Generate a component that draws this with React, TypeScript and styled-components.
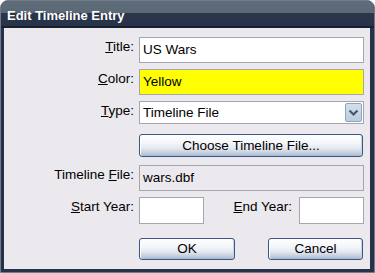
import React from 'react';
import styled, { createGlobalStyle } from 'styled-components';

const GlobalStyle = createGlobalStyle`
  html, body {
    margin: 0;
    padding: 0;
    background: #ffffff;
  }
  * {
    box-sizing: border-box;
  }
`;

const Window = styled.div`
  width: 375px;
  height: 273px;
  display: flex;
  flex-direction: column;
  border: 1px solid #6f7c8c;
  border-radius: 8px 8px 0 0;
  background: #26324a;
  overflow: hidden;
  font-family: 'Liberation Sans', Arial, sans-serif;
`;

const TitleBar = styled.div`
  height: 27px;
  flex: none;
  display: flex;
  align-items: center;
  padding: 3px 0 0 6px;
  background: linear-gradient(#5f6d7a 0%, #5b6976 46%, #2b3649 48%, #27334a 100%);
  border-bottom: 2px solid #18202e;
  color: #ffffff;
  font-size: 13px;
  font-weight: bold;
`;

const Body = styled.div`
  flex: 1;
  margin: 0 4px 3px 3px;
  padding: 9px 6px 0 0;
  background: #ebe9ed;
  display: flex;
  flex-direction: column;
`;

const Row = styled.div<{ $mt: number; $h: number }>`
  display: grid;
  grid-template-columns: 130px 1fr;
  column-gap: 5px;
  margin-top: ${p => p.$mt}px;
  height: ${p => p.$h}px;
`;

const Label = styled.label`
  text-align: right;
  font-size: 13.5px;
  color: #000000;
  padding-top: 2px;
  white-space: nowrap;
`;

const Field = styled.div<{ $bg?: string }>`
  height: 100%;
  border: 1px solid #a4a8ae;
  background: ${p => p.$bg || '#ffffff'};
  font-size: 13.5px;
  color: #000000;
  padding: 0 3px 1px;
  display: flex;
  align-items: center;
  position: relative;
`;

const SelectArrow = styled.div`
  position: absolute;
  top: 1px;
  right: 1px;
  bottom: 1px;
  width: 17px;
  border: 1px solid #8fa3bd;
  border-radius: 2px;
  background: linear-gradient(#d3dfec, #bccddf);
  display: flex;
  align-items: center;
  justify-content: center;
`;

const Button = styled.button<{ $w: number }>`
  height: 100%;
  width: ${p => p.$w}px;
  border: 1px solid #3a5684;
  border-radius: 3px;
  background: linear-gradient(#ffffff 0%, #f3f5f9 40%, #e2e7ef 65%, #c4cfdd 85%, #a9b8cc 100%);
  box-shadow: inset 1px 0 0 #ffffff, inset -1px 0 0 #c9d3e1;
  font-family: 'Liberation Sans', Arial, sans-serif;
  font-size: 13.5px;
  color: #000000;
  padding: 0 0 1px;
`;

const YearGroup = styled.div`
  display: flex;
  height: 100%;
`;

const YearInput = styled(Field)`
  width: 65px;
  flex: none;
`;

const InlineLabel = styled(Label)`
  flex: 1;
  padding-right: 7px;
`;

const ButtonRow = styled.div`
  display: flex;
  justify-content: space-between;
  height: 100%;
  padding-right: 1px;
`;

const Chevron = () => (
  <svg width="11" height="8" viewBox="0 0 11 8">
    <polyline points="1.5,1.5 5.5,5.5 9.5,1.5" fill="none" stroke="#4a5666" strokeWidth="2.2" />
  </svg>
);

export default function App() {
  return (
    <>
      <GlobalStyle />
      <Window>
        <TitleBar>Edit Timeline Entry</TitleBar>
        <Body>
          <Row $mt={0} $h={26}>
            <Label><u>T</u>itle:</Label>
            <Field>US Wars</Field>
          </Row>
          <Row $mt={6} $h={26}>
            <Label><u>C</u>olor:</Label>
            <Field $bg="#ffff00">Yellow</Field>
          </Row>
          <Row $mt={6} $h={23}>
            <Label><u>T</u>ype:</Label>
            <Field>
              Timeline File
              <SelectArrow>
                <Chevron />
              </SelectArrow>
            </Field>
          </Row>
          <Row $mt={10} $h={23}>
            <span />
            <Button $w={224}>Choose Timeline File...</Button>
          </Row>
          <Row $mt={8} $h={26}>
            <Label>Timeline <u>F</u>ile:</Label>
            <Field $bg="#ebe9ed">wars.dbf</Field>
          </Row>
          <Row $mt={6} $h={27}>
            <Label><u>S</u>tart Year:</Label>
            <YearGroup>
              <YearInput />
              <InlineLabel><u>E</u>nd Year:</InlineLabel>
              <YearInput />
            </YearGroup>
          </Row>
          <Row $mt={14} $h={22}>
            <span />
            <ButtonRow>
              <Button $w={96}>OK</Button>
              <Button $w={95}>Cancel</Button>
            </ButtonRow>
          </Row>
        </Body>
      </Window>
    </>
  );
}
